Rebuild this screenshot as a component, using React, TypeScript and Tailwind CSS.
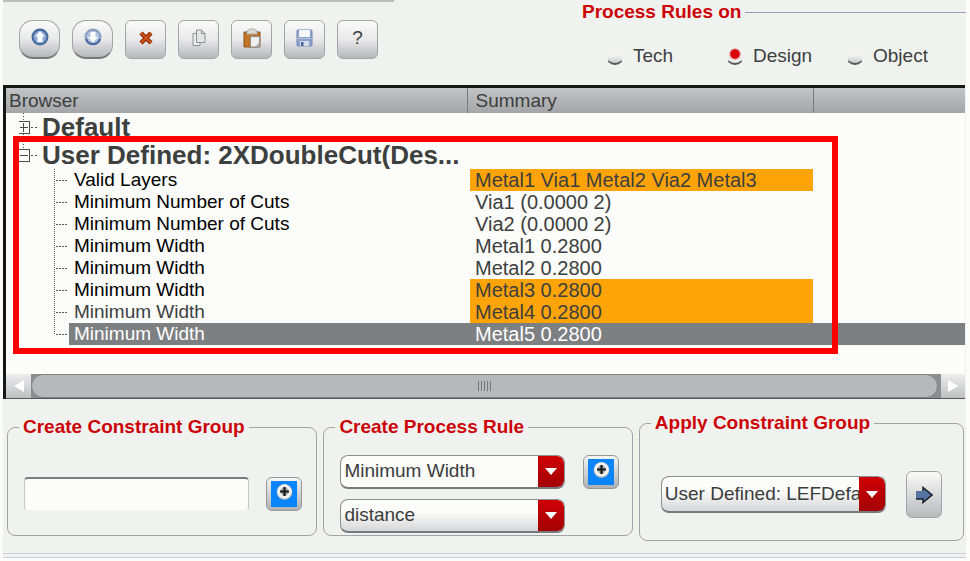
import React from "react";

const rows = [
  { name: "Valid Layers", value: "Metal1 Via1 Metal2 Via2 Metal3", tone: "text-black", mark: true },
  { name: "Minimum Number of Cuts", value: "Via1 (0.0000 2)", tone: "text-black", mark: false },
  { name: "Minimum Number of Cuts", value: "Via2 (0.0000 2)", tone: "text-black", mark: false },
  { name: "Minimum Width", value: "Metal1 0.2800", tone: "text-black", mark: false },
  { name: "Minimum Width", value: "Metal2 0.2800", tone: "text-black", mark: false },
  { name: "Minimum Width", value: "Metal3 0.2800", tone: "text-black", mark: true },
  { name: "Minimum Width", value: "Metal4 0.2800", tone: "text-[#3c403e]", mark: true },
  { name: "Minimum Width", value: "Metal5 0.2800", tone: "text-white", mark: false, selected: true },
];

function ToolButton({ label, round, children }: { label: string; round?: boolean; children: React.ReactNode }) {
  return (
    <button
      type="button"
      aria-label={label}
      className={
        "flex h-[39px] w-[41px] items-center justify-center border border-[#a2a4a8] bg-linear-to-b from-[#fbfbfa] via-[#e9e9ea] to-[#b6b7bb] pb-1 " +
        (round ? "rounded-[14px] border-b-2 border-b-[#77797c]" : "rounded-md")
      }
    >
      {children}
    </button>
  );
}

function RoundArrow({ down }: { down?: boolean }) {
  return (
    <svg width="18" height="18" viewBox="0 0 18 18">
      <circle cx="9" cy="9" r="7.4" fill={down ? "#b4c4de" : "#8fa8cf"} stroke={down ? "#8b9fc2" : "#4668a0"} strokeWidth="2.2" />
      {down && <path d="M2 11 A7.4 7.4 0 0 0 16 11" fill="none" stroke="#4668a0" strokeWidth="2.2" />}
      <path
        d={down ? "M9 14.5 L14 9 H11.5 V4 H6.5 V9 H4 Z" : "M9 3 L14 8.5 H11.5 V14 H6.5 V8.5 H4 Z"}
        fill="#fcfcfb"
      />
    </svg>
  );
}

function PlusButton({ label }: { label: string }) {
  return (
    <button
      type="button"
      aria-label={label}
      className="flex h-[34px] w-9 shrink-0 items-center justify-center rounded-md border border-[#95979a] bg-linear-to-b from-[#f6f6f6] to-[#aeb0b2]"
    >
      <svg width="26" height="26" viewBox="0 0 26 26">
        <rect width="26" height="26" fill="#0a84fb" />
        <circle cx="13.5" cy="11" r="7.8" fill="#b9bdbe" />
        <circle cx="13.5" cy="10.5" r="7.2" fill="#f2f2f0" />
        <circle cx="13.5" cy="10.5" r="4.2" fill="#a9abab" />
        <path d="M13.5 6 V15 M9 10.5 H18" stroke="#16181a" strokeWidth="2.2" />
      </svg>
    </button>
  );
}

function Combo({ label, options, plain, tall }: { label: string; options: string[]; plain?: boolean; tall?: boolean }) {
  return (
    <div
      className={
        "grid w-full max-w-[225px] overflow-hidden rounded-lg border border-[#8d9092] border-b-2 border-b-[#77797b] " +
        (tall ? "h-[37px] " : "h-[34px] ") +
        (plain ? "bg-[#fcfcfa]" : "bg-linear-to-b from-[#fcfcfa] from-40% to-[#d6d7da]")
      }
    >
      <select
        aria-label={label}
        className="col-start-1 row-start-1 w-full min-w-0 appearance-none bg-transparent pr-[26px] pl-[3px] text-[19px] text-[#3a3d3c] outline-none"
      >
        {options.map((o) => (
          <option key={o}>{o}</option>
        ))}
      </select>
      <span className="pointer-events-none col-start-1 row-start-1 flex w-[26px] items-center justify-center justify-self-end rounded-r-md bg-linear-to-b from-[#cf0206] to-[#a30004]">
        <svg width="12" height="7" viewBox="0 0 12 7">
          <path d="M0 0 H12 L6 7 Z" fill="#fff" />
        </svg>
      </span>
    </div>
  );
}

function Group({ title, className, children }: { title: string; className: string; children: React.ReactNode }) {
  return (
    <fieldset className={"min-w-0 rounded-lg border border-[#a2a4a5] px-[11px] " + className}>
      <legend className="px-1 text-[19px] leading-6 font-bold whitespace-nowrap text-[#cc0206]">{title}</legend>
      {children}
    </fieldset>
  );
}

function TreeMark({ open }: { open?: boolean }) {
  return (
    <svg width="23" height="28" viewBox="0 0 23 28" className="shrink-0" shapeRendering="crispEdges">
      <path d="M4.5 0 V8" stroke="#4b4e4e" strokeDasharray="1 2" />
      <path d="M0 8.5 H10.5 V20.5 H0 M1 14.5 H9" stroke="#4b4e4e" fill="none" />
      {!open && <path d="M4.5 10 V19" stroke="#4b4e4e" />}
      {!open && <path d="M4.5 21 V28" stroke="#4b4e4e" strokeDasharray="1 2" />}
      <path d="M12 14.5 H18" stroke="#4b4e4e" strokeDasharray="2 2" />
    </svg>
  );
}

export default function App() {
  return (
    <main className="min-h-screen overflow-hidden bg-[#fcfcfa] font-['Liberation_Sans',Arial,sans-serif] text-[19px] text-[#3c403e]">
      <div className="mr-1 ml-[3px] bg-[#f0f2f0]">
        <header className="flex h-[85px] justify-between">
          <div className="w-[391px] border-t-2 border-[#b9c0b7]">
            <div className="flex gap-3 pt-[18px] pl-4" role="toolbar" aria-label="Constraint actions">
              <ToolButton label="Move up" round>
                <RoundArrow />
              </ToolButton>
              <ToolButton label="Move down" round>
                <RoundArrow down />
              </ToolButton>
              <ToolButton label="Delete">
                <svg width="14" height="14" viewBox="0 0 14 14">
                  <path d="M2 2 L12 12 M12 2 L2 12" stroke="#8e2706" strokeWidth="4.4" />
                  <path d="M2 2 L12 12 M12 2 L2 12" stroke="#cf5517" strokeWidth="2" />
                </svg>
              </ToolButton>
              <ToolButton label="Copy">
                <svg width="14" height="18" viewBox="0 0 14 18">
                  <path d="M1 4.5 H8 V16.5 H1 Z" fill="#ececec" stroke="#8e9091" />
                  <path d="M4.5 1 H9.5 L13 4.5 V13.5 H4.5 Z" fill="#e4e5e5" stroke="#8e9091" />
                  <path d="M9.5 1 V4.5 H13" fill="none" stroke="#8e9091" />
                </svg>
              </ToolButton>
              <ToolButton label="Paste">
                <svg width="18" height="20" viewBox="0 0 18 20">
                  <path d="M1 4 H17 V19 H1 Z" fill="#c37527" stroke="#8c5018" />
                  <path d="M4 3 L7 1 H11 L14 3 V6 H4 Z" fill="#d9dad6" stroke="#a9aaa6" />
                  <path d="M7.5 8.5 H16.5 V19 H7.5 Z" fill="#f0f0ee" stroke="#8c8e8d" />
                  <path d="M12 19 L16.5 14 V19 Z" fill="#a7a9a9" />
                </svg>
              </ToolButton>
              <ToolButton label="Save">
                <svg width="17" height="18" viewBox="0 0 17 18">
                  <rect x="1" y="1" width="15" height="16" rx="1" fill="#8ea2cb" stroke="#6c83b1" />
                  <path d="M3 1 H14 V8 H3 Z" fill="#f5f6fa" />
                  <path d="M1 9.5 H16" stroke="#b2c0dc" />
                  <path d="M4 12 H13 V17 H4 Z" fill="#d7dce6" />
                  <path d="M5 13 H7.5 V17 H5 Z" fill="#45639b" />
                </svg>
              </ToolButton>
              <ToolButton label="Help">
                <span className="text-[19px] leading-5">?</span>
              </ToolButton>
            </div>
          </div>
          <fieldset className="w-[384px]">
            <legend className="flex w-full items-center gap-1 text-[19px] leading-6 font-bold text-[#cc0206]">
              Process Rules on
              <span className="h-px flex-1 bg-[#9a9da8]" />
            </legend>
            <div className="grid grid-cols-[120px_120px_1fr] pt-5 pl-6 leading-6">
              {["Tech", "Design", "Object"].map((name) => (
                <label key={name} className="flex items-center gap-[9px]">
                  <input
                    type="radio"
                    name="scope"
                    defaultChecked={name === "Design"}
                    className="size-[18px] appearance-none rounded-full border border-b-2 border-[#f4f4f2] border-b-[#555858] bg-linear-to-b from-[#f3f3f2] from-50% to-[#c7c8ca] checked:bg-[radial-gradient(circle_at_50%_40%,#d90006_0_4px,#ececeb_6px)]"
                  />
                  {name}
                </label>
              ))}
            </div>
          </fieldset>
        </header>

        <section aria-label="Constraints" className="relative mr-px border-t-[3px] border-l-[3px] border-[#161817] bg-[#fcfcfa]">
          <table className="w-full table-fixed border-collapse text-left">
            <colgroup>
              <col className="w-[461px]" />
              <col className="w-[346px]" />
              <col />
            </colgroup>
            <thead>
              <tr className="h-[25px] bg-linear-to-b from-[#c3c4c7] to-[#a3a5a8] leading-6">
                <th className="pl-[3px] font-normal">Browser</th>
                <th className="border-l border-[#787a7d] pl-2 font-normal">Summary</th>
                <th className="border-l border-[#787a7d]" aria-label="Notes" />
              </tr>
            </thead>
            <tbody>
              <tr className="h-7">
                <td colSpan={3}>
                  <div className="flex items-center pl-[13px] text-[26px] leading-7 font-bold">
                    <TreeMark />
                    Default
                  </div>
                </td>
              </tr>
              <tr className="h-7">
                <td colSpan={3}>
                  <div className="flex items-center pl-[13px] text-[26px] leading-7 font-bold">
                    <TreeMark open />
                    User Defined: 2XDoubleCut(Des...
                  </div>
                </td>
              </tr>
              {rows.map((row, i) => (
                <tr key={i} className="h-[22px] leading-[22px]">
                  <td>
                    <div className="flex pl-12">
                      <svg width="15" height="22" viewBox="0 0 15 22" className="shrink-0" shapeRendering="crispEdges">
                        <path d={row.selected ? "M0.5 0 V12" : "M0.5 0 V22"} stroke="#55585a" strokeDasharray="1 1" />
                        <path d="M2 11.5 H14" stroke="#55585a" strokeDasharray="2 1" />
                      </svg>
                      <span className={"flex-1 pl-[5px] " + row.tone + (row.selected ? " bg-[#7d8082]" : "")}>{row.name}</span>
                    </div>
                  </td>
                  <td className={"text-[20px] " + (row.selected ? "bg-[#7d8082] text-white" : "")}>
                    <div className={row.mark ? "ml-[3px] bg-[#ffa408] pl-[5px]" : "pl-2"}>{row.value}</div>
                  </td>
                  <td className={row.selected ? "bg-[#7d8082]" : ""} />
                </tr>
              ))}
            </tbody>
          </table>
          <div className="absolute top-[48px] left-[7px] h-[218px] w-[825px] border-[6px] border-[#fe0000]" />
          <div className="mt-[29px] flex h-[25px] border-b border-[#555]">
            <button type="button" aria-label="Scroll left" className="flex w-[25px] items-center justify-center bg-linear-to-b from-[#ededee] to-[#bfc0c3]">
              <svg width="10" height="12" viewBox="0 0 10 12">
                <path d="M10 0 V12 L0 6 Z" fill="#fff" />
              </svg>
            </button>
            <div className="flex-1 bg-[#8b8d8e] pr-[3px]">
              <div className="flex h-full items-center justify-center gap-[2px] rounded-xl border border-[#818384] bg-[#b7b8ba]">
                {[0, 1, 2, 3, 4].map((n) => (
                  <span key={n} className="h-[10px] w-px bg-[#77797a]" />
                ))}
              </div>
            </div>
            <button type="button" aria-label="Scroll right" className="flex w-6 items-center justify-center bg-linear-to-b from-[#ededee] to-[#bfc0c3]">
              <svg width="10" height="12" viewBox="0 0 10 12">
                <path d="M0 0 V12 L10 6 Z" fill="#fff" />
              </svg>
            </button>
          </div>
        </section>

        <div className="flex gap-[6px] pt-3 pr-[2px] pb-3 pl-1">
          <Group title="Create Constraint Group" className="mt-1 h-[121px] flex-[310]">
            <div className="flex items-center justify-between pt-[38px] pr-[3px] pl-[5px]">
              <input
                aria-label="Constraint group name"
                className="h-[34px] w-[225px] min-w-0 rounded-sm border border-t-2 border-[#c5c7c8] border-t-[#797c80] border-b-[#f4f4f2] bg-[#fcfcfa] px-2 outline-none"
              />
              <PlusButton label="Add constraint group" />
            </div>
          </Group>
          <Group title="Create Process Rule" className="mt-1 h-[121px] flex-[309]">
            <div className="flex justify-between gap-4 pt-4 pr-[2px] pl-[5px]">
              <div className="flex flex-1 flex-col gap-[10px]">
                <Combo label="Rule" options={["Minimum Width"]} plain />
                <Combo label="Rule kind" options={["distance"]} />
              </div>
              <PlusButton label="Add process rule" />
            </div>
          </Group>
          <Group title="Apply Constraint Group" className="h-[130px] flex-[326]">
            <div className="flex items-center justify-between gap-4 px-[10px] pt-9">
              <Combo label="Constraint group" options={["User Defined: LEFDefault"]} tall />
              <button
                type="button"
                aria-label="Apply"
                className="flex h-[47px] w-9 shrink-0 items-center justify-center rounded-md border border-[#a2a4a8] bg-linear-to-b from-[#fbfbfa] to-[#b9babd]"
              >
                <svg width="18" height="18" viewBox="0 0 18 18">
                  <path d="M1 5 H8 V1.5 L17 9 L8 16.5 V13 H1 Z" fill="#54759f" />
                  <path d="M1 13 H8 V16.5 L17 9 L8 1.5 V5" fill="none" stroke="#17202b" strokeWidth="1.5" />
                </svg>
              </button>
            </div>
          </Group>
        </div>
        <div className="h-[5px] border-y border-[#cdd0d8]" />
      </div>
    </main>
  );
}
